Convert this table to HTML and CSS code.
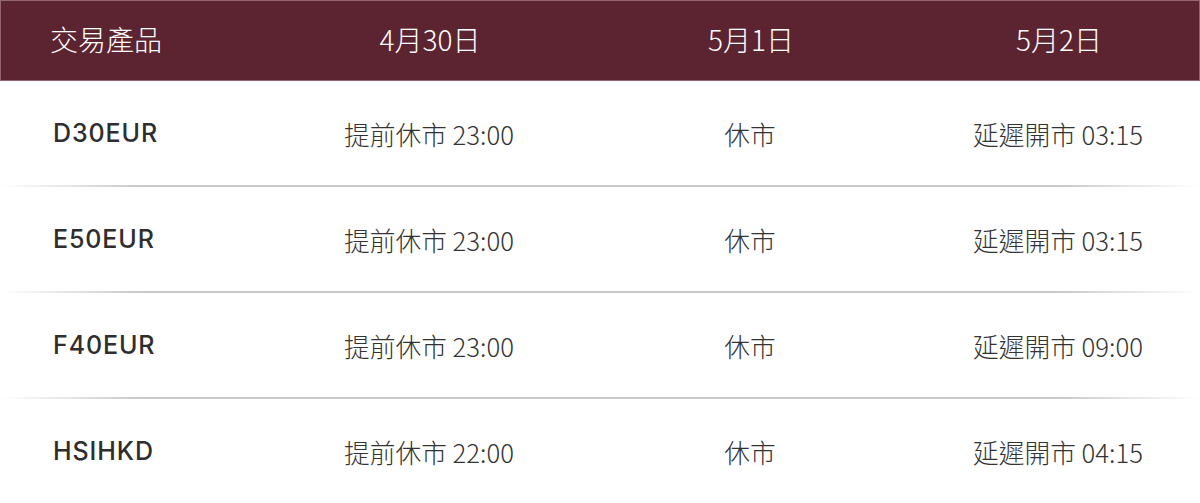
FILE: index.html
```html
<!DOCTYPE html>
<html lang="zh-Hant">
<head>
<meta charset="utf-8">
<link rel="stylesheet" href="styles.css">
</head>
<body>
<div class="table">
  <div class="row head">
    <div class="cell first">交易產品</div>
    <div class="cell">4月30日</div>
    <div class="cell">5月1日</div>
    <div class="cell">5月2日</div>
  </div>
  <div class="row">
    <div class="cell first sym">D30EUR</div>
    <div class="cell">提前休市 23:00</div>
    <div class="cell">休市</div>
    <div class="cell">延遲開市 03:15</div>
  </div>
  <div class="row">
    <div class="cell first sym">E50EUR</div>
    <div class="cell">提前休市 23:00</div>
    <div class="cell">休市</div>
    <div class="cell">延遲開市 03:15</div>
  </div>
  <div class="row">
    <div class="cell first sym">F40EUR</div>
    <div class="cell">提前休市 23:00</div>
    <div class="cell">休市</div>
    <div class="cell">延遲開市 09:00</div>
  </div>
  <div class="row">
    <div class="cell first sym">HSIHKD</div>
    <div class="cell">提前休市 22:00</div>
    <div class="cell">休市</div>
    <div class="cell">延遲開市 04:15</div>
  </div>
</div>
</body>
</html>
```
FILE: styles.css
```css
html, body {
  margin: 0;
  padding: 0;
  background: #ffffff;
}
body {
  font-family: "Noto Sans CJK TC", "Noto Sans", sans-serif;
  color: #333333;
}
.table {
  width: 1200px;
}
.row {
  display: grid;
  grid-template-columns: 274px 310px 332px 284px;
  height: 104px;
  align-items: center;
  font-size: 25.7px;
  font-weight: 300;
  position: relative;
}
.row:not(.head) {
  margin-bottom: 2px;
}
.row:not(.head)::after {
  content: "";
  position: absolute;
  left: 0;
  right: 0;
  bottom: -2px;
  height: 2px;
  background: linear-gradient(to right, rgba(200,200,200,0) 0%, #c8c8c8 12%, #c8c8c8 88%, rgba(200,200,200,0) 100%);
}
.head {
  height: 76px;
  padding-bottom: 3px;
  background: #5c2331;
  border: 1px solid #94646f;
  color: #ffffff;
  font-size: 28px;
}
.cell {
  text-align: center;
  white-space: nowrap;
}
.cell.first {
  text-align: left;
  padding-left: 53px;
}
.head .cell.first {
  padding-left: 49px;
}
.sym {
  font-family: "Inter", "Lato", sans-serif;
  font-weight: 500;
  font-size: 25px;
  letter-spacing: 0.9px;
  color: #2e2e2e;
}
```
